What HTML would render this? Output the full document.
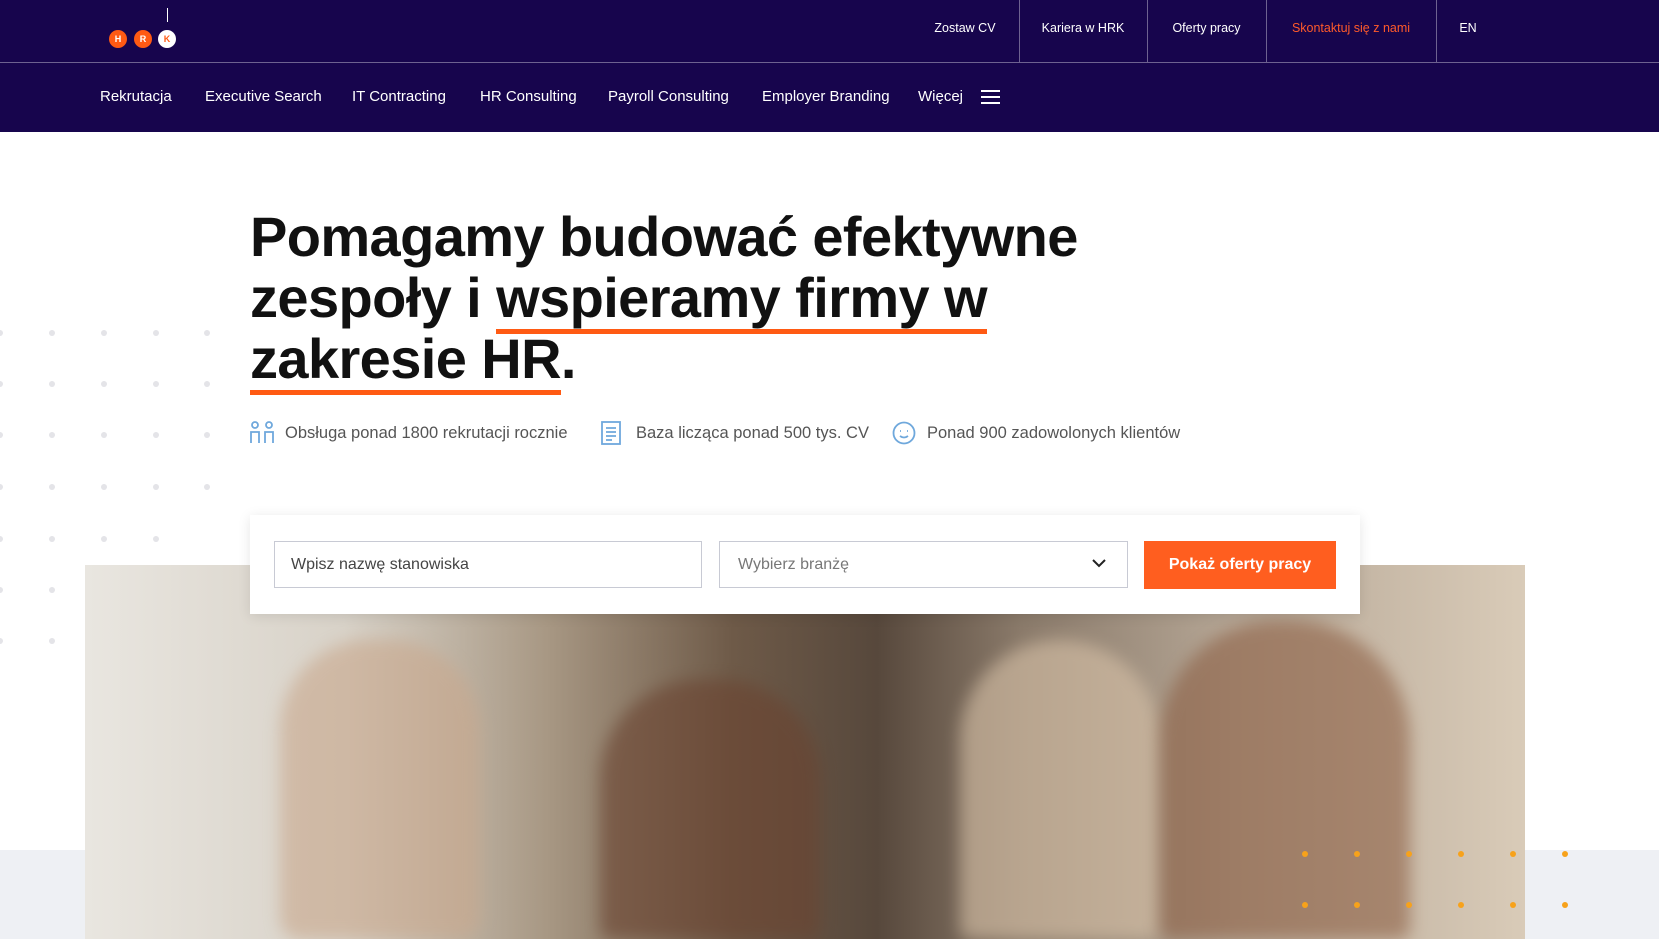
<!DOCTYPE html>
<html><head><meta charset="utf-8"><style>
*{margin:0;padding:0;box-sizing:border-box}
body{width:1659px;height:939px;overflow:hidden;background:#fff;font-family:"Liberation Sans",sans-serif;position:relative}
.top{position:absolute;left:0;top:0;width:1659px;height:132px;background:#17054d}
.line{position:absolute;left:0;top:62px;width:1659px;height:1px;background:#6e6290}
.tl{position:absolute;top:0;height:62px;line-height:56px;color:#fff;font-size:12.5px;text-align:center}
.sep{position:absolute;top:0;width:1px;height:62px;background:#6e6290}
.nav{position:absolute;top:88px;color:#fff;font-size:15px}
.logo span{position:absolute;top:30px;width:18px;height:18px;border-radius:50%;background:#ff5a13;color:#fff;font-size:9px;font-weight:bold;text-align:center;line-height:18px}
h1{position:absolute;left:250px;top:206px;font-size:56px;line-height:61px;font-weight:bold;color:#111;letter-spacing:-0.6px}
u{text-decoration:none;border-bottom:5px solid #ff5a13;padding-bottom:0}
.stat{position:absolute;top:424px;font-size:16.5px;color:#555}
.dot{position:absolute;width:6px;height:6px;border-radius:50%;background:#e4e4e8}
.od{position:absolute;width:6px;height:6px;border-radius:50%;background:#f7a21b;z-index:5}
</style></head><body>
<div class="top"></div><div class="line"></div>
<div style="position:absolute;left:167px;top:8px;width:1px;height:14px;background:#fff"></div>
<div class="logo"><span style="left:109px">H</span><span style="left:134px">R</span><span style="left:158px;background:#fff;color:#ff5a13">K</span></div>
<div class="tl" style="left:920px;width:90px">Zostaw CV</div>
<div class="sep" style="left:1019px"></div>
<div class="tl" style="left:1019px;width:128px">Kariera w HRK</div>
<div class="sep" style="left:1147px"></div>
<div class="tl" style="left:1147px;width:119px">Oferty pracy</div>
<div class="sep" style="left:1266px"></div>
<div class="tl" style="left:1266px;width:170px;color:#ff5a2a">Skontaktuj się z nami</div>
<div class="sep" style="left:1436px"></div>
<div class="tl" style="left:1452px;width:32px">EN</div>
<div class="nav" style="left:100px">Rekrutacja</div>
<div class="nav" style="left:205px">Executive Search</div>
<div class="nav" style="left:352px">IT Contracting</div>
<div class="nav" style="left:480px">HR Consulting</div>
<div class="nav" style="left:608px">Payroll Consulting</div>
<div class="nav" style="left:762px">Employer Branding</div>
<div class="nav" style="left:918px">Więcej</div>
<div style="position:absolute;left:981px;top:90px;width:19px;height:2px;background:#fff;box-shadow:0 6px 0 #fff,0 12px 0 #fff"></div>

<h1>Pomagamy budować efektywne<br>zespoły i <u>wspieramy firmy w</u><br><u>zakresie HR</u>.</h1>

<svg style="position:absolute;left:249px;top:421px" width="26" height="24" viewBox="0 0 26 24" fill="none" stroke="#6fa8dc" stroke-width="1.8"><circle cx="6" cy="4" r="3"/><circle cx="20" cy="4" r="3"/><path d="M2 22V11h8v11M16 22V11h8v11"/></svg>
<div class="stat" style="left:285px">Obsługa ponad 1800 rekrutacji rocznie</div>
<svg style="position:absolute;left:600px;top:420px" width="22" height="26" viewBox="0 0 22 26" fill="none" stroke="#6fa8dc" stroke-width="1.8"><rect x="2" y="2" width="18" height="22"/><path d="M6 8h10M6 12h10M6 16h10M6 20h6"/></svg>
<div class="stat" style="left:636px">Baza licząca ponad 500 tys. CV</div>
<svg style="position:absolute;left:892px;top:421px" width="24" height="24" viewBox="0 0 24 24" fill="none" stroke="#6fa8dc" stroke-width="1.8"><circle cx="12" cy="12" r="10.5"/><path d="M8 10h1M15 10h1M8 15q4 3 8 0"/></svg>
<div class="stat" style="left:927px">Ponad 900 zadowolonych klientów</div>

<div id="dots"></div>
<div style="position:absolute;left:0;top:850px;width:1659px;height:89px;background:#eef0f4"></div>
<div style="position:absolute;left:85px;top:565px;width:1440px;height:374px;background:linear-gradient(90deg,#e9e6e0 0%,#d8d2c8 18%,#a89884 32%,#6e5a48 45%,#57483c 55%,#8a7a6a 65%,#b6a796 80%,#d9cbb8 100%)"></div>
<div style="position:absolute;left:280px;top:640px;width:200px;height:299px;border-radius:90px 90px 20px 20px;background:#c9a88d;opacity:.6;filter:blur(8px)"></div>
<div style="position:absolute;left:600px;top:680px;width:220px;height:259px;border-radius:100px 100px 10px 10px;background:#6a4330;opacity:.6;filter:blur(8px)"></div>
<div style="position:absolute;left:960px;top:640px;width:200px;height:299px;border-radius:100px 100px 10px 10px;background:#d8c2a8;opacity:.6;filter:blur(8px)"></div>
<div style="position:absolute;left:1160px;top:620px;width:250px;height:319px;border-radius:120px 120px 10px 10px;background:#8a5a3e;opacity:.55;filter:blur(8px)"></div>
<div style="position:absolute;left:250px;top:515px;width:1110px;height:99px;background:#fff;box-shadow:0 2px 12px rgba(0,0,0,.1)"></div>
<div style="position:absolute;left:274px;top:541px;width:428px;height:47px;border:1px solid #c8cad4;font-size:16px;color:#444;line-height:45px;padding-left:16px">Wpisz nazwę stanowiska</div>
<div style="position:absolute;left:719px;top:541px;width:409px;height:47px;border:1px solid #c8cad4;font-size:16px;color:#777;line-height:45px;padding-left:18px">Wybierz branżę</div>
<svg style="position:absolute;left:1092px;top:558px" width="14" height="10" viewBox="0 0 14 10" fill="none" stroke="#222" stroke-width="2"><path d="M1 2l6 6 6-6"/></svg>
<div style="position:absolute;left:1144px;top:541px;width:192px;height:48px;background:#ff5e1f;color:#fff;font-size:16px;font-weight:bold;text-align:center;line-height:48px">Pokaż oferty pracy</div>
<script>
var d=document.getElementById('dots'),h='';
var xs=[0,52,104,156,207],ys=[333,384,435,487,539,590,641];
ys.forEach(function(y,i){xs.forEach(function(x,j){if(i<4||j<2||(i<6&&j<4))h+='<div class="dot" style="left:'+(x-3)+'px;top:'+(y-3)+'px"></div>';});});
[854,905].forEach(function(y){for(var k=0;k<6;k++)h+='<div class="od" style="left:'+(1302+k*52)+'px;top:'+(y-3)+'px"></div>';});
d.innerHTML=h;
</script>
</body></html>
